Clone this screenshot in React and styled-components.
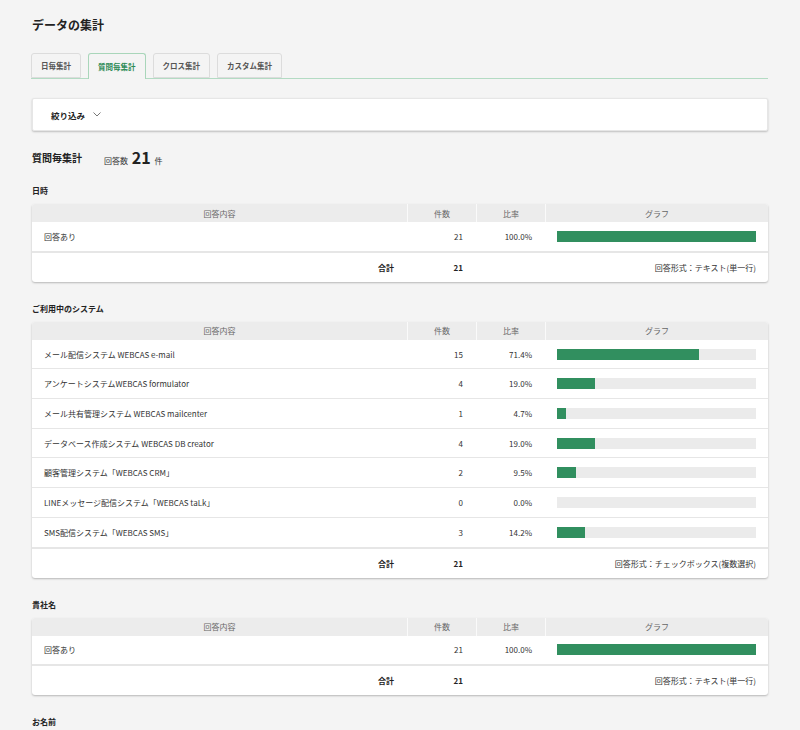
import React, { useState } from "react";
import styled, { createGlobalStyle } from "styled-components";

const sections = [
  {
    title: "日時",
    rows: [{ label: "回答あり", count: 21, rate: 100.0 }],
    total: 21,
    format: "回答形式：テキスト(単一行)",
  },
  {
    title: "ご利用中のシステム",
    rows: [
      { label: "メール配信システム WEBCAS e-mail", count: 15, rate: 71.4 },
      { label: "アンケートシステムWEBCAS formulator", count: 4, rate: 19.0 },
      { label: "メール共有管理システム WEBCAS mailcenter", count: 1, rate: 4.7 },
      { label: "データベース作成システム WEBCAS DB creator", count: 4, rate: 19.0 },
      { label: "顧客管理システム「WEBCAS CRM」", count: 2, rate: 9.5 },
      { label: "LINEメッセージ配信システム「WEBCAS taLk」", count: 0, rate: 0.0 },
      { label: "SMS配信システム「WEBCAS SMS」", count: 3, rate: 14.2 },
    ],
    total: 21,
    format: "回答形式：チェックボックス(複数選択)",
  },
  {
    title: "貴社名",
    rows: [{ label: "回答あり", count: 21, rate: 100.0 }],
    total: 21,
    format: "回答形式：テキスト(単一行)",
  },
  {
    title: "お名前",
    rows: [{ label: "回答あり", count: 21, rate: 100.0 }],
    total: 21,
    format: "回答形式：テキスト(単一行)",
  },
];

const tabs = ["日毎集計", "質問毎集計", "クロス集計", "カスタム集計"];

function App() {
  const [activeTab, setActiveTab] = useState(1);

  return (
    <Page>
      <GlobalStyle />
      <Title>データの集計</Title>
      <TabBar>
        {tabs.map((t, i) => (
          <Tab key={t} active={i === activeTab} onClick={() => setActiveTab(i)}>
            {t}
          </Tab>
        ))}
      </TabBar>
      <FilterPanel>
        <FilterLabel>絞り込み</FilterLabel>
        <svg width="8" height="5" viewBox="0 0 8 5">
          <path d="M0.5 0.5 L4 4 L7.5 0.5" fill="none" stroke="#777" strokeWidth="1" />
        </svg>
      </FilterPanel>
      <Summary>
        <SummaryTitle>質問毎集計</SummaryTitle>
        <SummaryCount>
          回答数 <strong>21</strong> 件
        </SummaryCount>
      </Summary>
      <SectionList>
        {sections.map((s) => (
          <section key={s.title}>
            <SectionLabel>{s.title}</SectionLabel>
            <Card>
              <HeadRow>
                <HeadCell>回答内容</HeadCell>
                <HeadCell>件数</HeadCell>
                <HeadCell>比率</HeadCell>
                <HeadCell>グラフ</HeadCell>
              </HeadRow>
              {s.rows.map((r) => (
                <BodyRow key={r.label}>
                  <LabelCell>{r.label}</LabelCell>
                  <NumCell>{r.count}</NumCell>
                  <NumCell>{r.rate.toFixed(1)}%</NumCell>
                  <GraphCell>
                    <Track>
                      <Fill style={{ width: `${r.rate}%` }} />
                    </Track>
                  </GraphCell>
                </BodyRow>
              ))}
              <FootRow>
                <NumCell bold>合計</NumCell>
                <NumCell bold>{s.total}</NumCell>
                <NumCell />
                <FormatCell>{s.format}</FormatCell>
              </FootRow>
            </Card>
          </section>
        ))}
      </SectionList>
    </Page>
  );
}

export default App;

const GlobalStyle = createGlobalStyle`
  html, body {
    margin: 0;
    background: #f4f4f4;
  }
  body {
    font-family: "Noto Sans CJK JP", "Noto Sans", sans-serif;
    color: #333;
  }
`;

const Page = styled.div`
  padding: 16px 32px 40px;
`;

const Title = styled.h1`
  margin: 0;
  font-size: 12px;
  line-height: 18px;
  font-weight: 700;
  color: #222;
`;

const TabBar = styled.div`
  display: flex;
  gap: 7px;
  margin-top: 19px;
  margin-left: -1px;
  border-bottom: 1px solid #b3dbc3;
  height: 25px;
`;

const Tab = styled.div`
  box-sizing: border-box;
  height: ${(p) => (p.active ? "26px" : "25px")};
  padding: 0 9px;
  display: flex;
  align-items: center;
  font-size: 7.5px;
  font-weight: 700;
  color: ${(p) => (p.active ? "#2e8b57" : "#555")};
  background: #f4f4f4;
  border: 1px solid ${(p) => (p.active ? "#a9d6ba" : "#dcdcdc")};
  border-bottom: ${(p) => (p.active ? "none" : "1px solid #dcdcdc")};
  border-radius: 3px 3px 0 0;
  cursor: pointer;
`;

const FilterPanel = styled.div`
  margin-top: 19px;
  height: 33px;
  box-sizing: border-box;
  background: #fff;
  border: 1px solid #e6e6e6;
  border-radius: 2px;
  box-shadow: 0 1px 2px rgba(0, 0, 0, 0.22);
  display: flex;
  align-items: center;
  gap: 8px;
  padding-left: 18px;
`;

const FilterLabel = styled.span`
  font-size: 8.5px;
  font-weight: 700;
  color: #222;
`;

const Summary = styled.div`
  margin-top: 16px;
  height: 20px;
  display: flex;
  align-items: center;
  gap: 22px;
`;

const SummaryTitle = styled.div`
  font-size: 10px;
  font-weight: 700;
  color: #222;
`;

const SummaryCount = styled.div`
  font-size: 8px;
  color: #333;

  strong {
    font-size: 16px;
    font-weight: 700;
    color: #222;
    margin: 0 2px;
  }
`;

const SectionList = styled.div`
  display: flex;
  flex-direction: column;
  gap: 20px;
  margin-top: 17px;
`;

const SectionLabel = styled.div`
  font-size: 8px;
  line-height: 14px;
  font-weight: 700;
  color: #222;
  margin-bottom: 6px;
`;

const Card = styled.div`
  background: #fff;
  border-radius: 3px;
  box-shadow: 0 1px 2px rgba(0, 0, 0, 0.25);
  overflow: hidden;
`;

const grid = `
  display: grid;
  grid-template-columns: 375px 69px 69px 1fr;
`;

const HeadRow = styled.div`
  ${grid}
  height: 18px;
  background: #ececec;
`;

const HeadCell = styled.div`
  display: flex;
  align-items: center;
  justify-content: center;
  font-size: 8px;
  color: #666;
  & + & {
    border-left: 1px solid #fafafa;
  }
`;

const BodyRow = styled.div`
  ${grid}
  height: 28.7px;
  border-bottom: 1px solid #e6e6e6;
  &:nth-last-child(2) {
    border-bottom-width: 2px;
  }
`;

const FootRow = styled.div`
  ${grid}
  height: 29px;
`;

const LabelCell = styled.div`
  display: flex;
  align-items: center;
  padding-left: 12px;
  font-size: 8px;
  color: #333;
`;

const NumCell = styled.div`
  display: flex;
  align-items: center;
  justify-content: flex-end;
  padding-right: 13px;
  font-size: 8px;
  font-weight: ${(p) => (p.bold ? 700 : 400)};
  color: ${(p) => (p.bold ? "#222" : "#333")};
`;

const GraphCell = styled.div`
  display: flex;
  align-items: center;
  padding: 0 12px;
`;

const Track = styled.div`
  width: 100%;
  height: 11px;
  background: #ebebeb;
`;

const Fill = styled.div`
  height: 100%;
  background: #318f5f;
`;

const FormatCell = styled.div`
  display: flex;
  align-items: center;
  justify-content: flex-end;
  padding-right: 12px;
  font-size: 8px;
  color: #333;
`;
